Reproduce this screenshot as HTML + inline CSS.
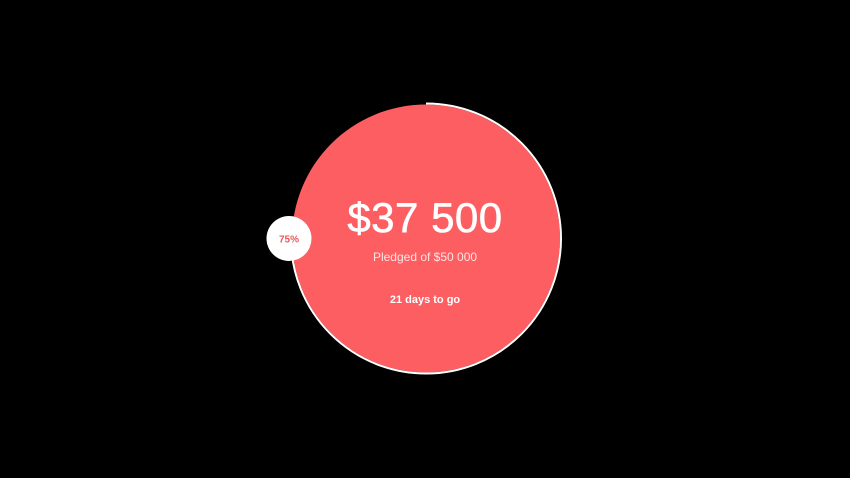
<!DOCTYPE html>
<html><head><meta charset="utf-8"><style>
html,body{margin:0;padding:0;background:#000;width:850px;height:478px;overflow:hidden;font-family:"Liberation Sans",sans-serif}
.t{position:absolute;left:0;width:850px;text-align:center;color:#fff}
</style></head><body>
<svg width="850" height="478" style="position:absolute;left:0;top:0">
<circle cx="426" cy="238.5" r="134" fill="#fd5e61"/>
<circle cx="426" cy="238.5" r="135" fill="none" stroke="#fff" stroke-width="2" stroke-dasharray="636.2 900" transform="rotate(-90 426 238.5)"/>
<circle cx="289" cy="238.5" r="22.5" fill="#fff"/>
<text x="289" y="242.5" text-anchor="middle" font-family="Liberation Sans" font-weight="bold" font-size="10" fill="#e9585c">75%</text>
</svg>
<div class="t" style="top:194px;font-size:42px;line-height:48px;letter-spacing:0.5px;-webkit-text-stroke:0.6px #fff">$37 500</div>
<div class="t" style="top:250px;font-size:12px;line-height:14px;color:#ffe4e4">Pledged of $50 000</div>
<div class="t" style="top:293px;font-size:11px;line-height:14px;font-weight:bold">21 days to go</div>
</body></html>
